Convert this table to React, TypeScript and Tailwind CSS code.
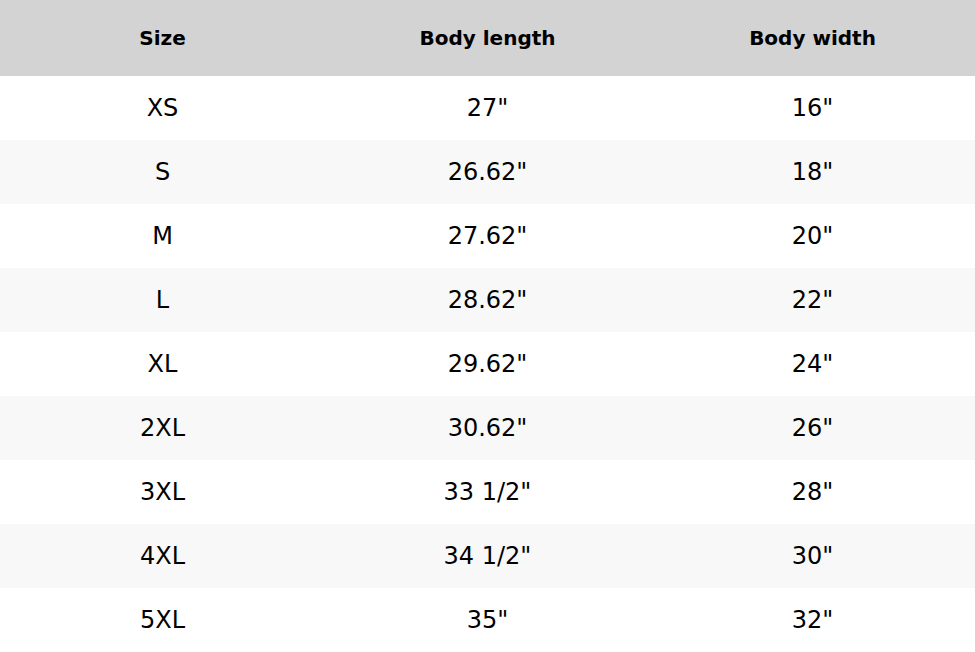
import React from 'react';

const rows = [
  { size: 'XS', length: '27"', width: '16"' },
  { size: 'S', length: '26.62"', width: '18"' },
  { size: 'M', length: '27.62"', width: '20"' },
  { size: 'L', length: '28.62"', width: '22"' },
  { size: 'XL', length: '29.62"', width: '24"' },
  { size: '2XL', length: '30.62"', width: '26"' },
  { size: '3XL', length: '33 1/2"', width: '28"' },
  { size: '4XL', length: '34 1/2"', width: '30"' },
  { size: '5XL', length: '35"', width: '32"' },
];

export default function App() {
  return (
    <div className="w-[975px] h-[652px] bg-white text-black font-['DejaVu_Sans',sans-serif]">
      <table className="w-full border-collapse table-fixed">
        <thead>
          <tr className="bg-[#d3d3d3] h-[76px] text-[20px] font-bold">
            <th className="text-center">Size</th>
            <th className="text-center">Body length</th>
            <th className="text-center">Body width</th>
          </tr>
        </thead>
        <tbody>
          {rows.map((r, i) => (
            <tr key={r.size} className={`h-[64px] text-[24px] ${i % 2 === 1 ? 'bg-[#f8f8f8]' : 'bg-white'}`}>
              <td className="text-center">{r.size}</td>
              <td className="text-center">{r.length}</td>
              <td className="text-center">{r.width}</td>
            </tr>
          ))}
        </tbody>
      </table>
    </div>
  );
}
